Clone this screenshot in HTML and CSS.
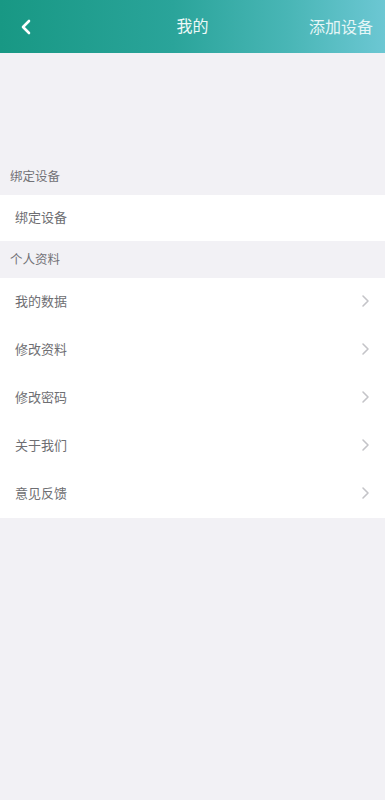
FILE: index.html
```html
<!DOCTYPE html>
<html lang="zh">
<head>
<meta charset="utf-8">
<link rel="stylesheet" href="styles.css">
</head>
<body>
<div class="page">
  <header class="nav">
    <span class="back">
      <svg width="12" height="16" viewBox="0 0 12 16"><path d="M9 2 L3 8 L9 14" fill="none" stroke="#fff" stroke-width="2.6" stroke-linecap="round" stroke-linejoin="round"/></svg>
    </span>
    <span class="title">我的</span>
    <span class="action">添加设备</span>
  </header>
  <div class="spacer"></div>
  <div class="section-label">绑定设备</div>
  <div class="group">
    <div class="row plain">绑定设备</div>
  </div>
  <div class="section-label">个人资料</div>
  <div class="group">
    <div class="row"><span>我的数据</span><svg class="chev" width="9" height="14" viewBox="0 0 9 14"><path d="M2 2 L7 7 L2 12" fill="none" stroke="#c4c4c8" stroke-width="1.6" stroke-linecap="round" stroke-linejoin="round"/></svg></div>
    <div class="row"><span>修改资料</span><svg class="chev" width="9" height="14" viewBox="0 0 9 14"><path d="M2 2 L7 7 L2 12" fill="none" stroke="#c4c4c8" stroke-width="1.6" stroke-linecap="round" stroke-linejoin="round"/></svg></div>
    <div class="row"><span>修改密码</span><svg class="chev" width="9" height="14" viewBox="0 0 9 14"><path d="M2 2 L7 7 L2 12" fill="none" stroke="#c4c4c8" stroke-width="1.6" stroke-linecap="round" stroke-linejoin="round"/></svg></div>
    <div class="row"><span>关于我们</span><svg class="chev" width="9" height="14" viewBox="0 0 9 14"><path d="M2 2 L7 7 L2 12" fill="none" stroke="#c4c4c8" stroke-width="1.6" stroke-linecap="round" stroke-linejoin="round"/></svg></div>
    <div class="row"><span>意见反馈</span><svg class="chev" width="9" height="14" viewBox="0 0 9 14"><path d="M2 2 L7 7 L2 12" fill="none" stroke="#c4c4c8" stroke-width="1.6" stroke-linecap="round" stroke-linejoin="round"/></svg></div>
  </div>
</div>
</body>
</html>
```
FILE: styles.css
```css
html, body {
  margin: 0;
  padding: 0;
  background: #f2f1f5;
  font-family: "Noto Sans CJK SC", "Noto Sans", sans-serif;
}
.page {
  width: 385px;
  min-height: 800px;
  background: #f2f1f5;
}
.nav {
  height: 53px;
  display: flex;
  align-items: center;
  justify-content: space-between;
  padding: 0 12px 0 20px;
  box-sizing: border-box;
  background: linear-gradient(90deg, #189884 0%, #2aa49a 45%, #49b6b6 75%, #6cc7d3 100%);
  color: #fff;
  position: relative;
}
.back {
  display: flex;
  align-items: center;
  width: 14px;
}
.title {
  position: absolute;
  left: 0;
  right: 0;
  top: -1px;
  text-align: center;
  font-size: 16px;
  line-height: 53px;
  pointer-events: none;
  color: #eef9f8;
}
.action {
  font-size: 16px;
  color: #e6f6f7;
  padding-bottom: 2px;
}
.spacer {
  height: 105px;
}
.section-label {
  height: 37px;
  line-height: 35px;
  padding-left: 10px;
  font-size: 12.5px;
  color: #727277;
}
.group {
  background: #fff;
}
.row {
  height: 48px;
  display: flex;
  align-items: center;
  justify-content: space-between;
  padding: 0 15px 3px 15px;
  box-sizing: border-box;
  font-size: 13px;
  color: #6e6e72;
}
.row.plain {
  height: 46px;
}
.chev {
  display: block;
  margin-top: 1px;
}
```
